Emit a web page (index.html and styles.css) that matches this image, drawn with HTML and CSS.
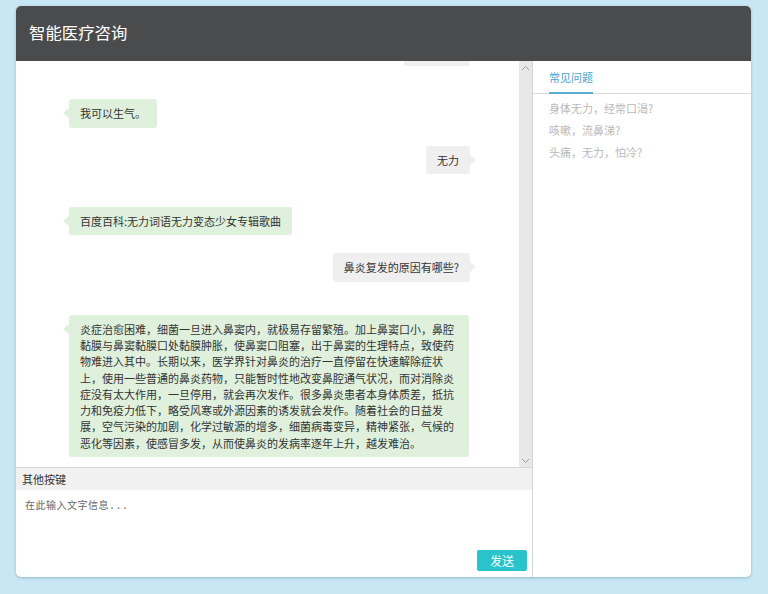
FILE: index.html
```html
<!DOCTYPE html>
<html lang="zh-CN">
<head>
<meta charset="utf-8">
<title>智能医疗咨询</title>
<link rel="stylesheet" href="styles.css">
</head>
<body>
<div class="app">
  <header class="header">智能医疗咨询</header>
  <div class="main">
    <section class="chat-col">
      <div class="chat-wrap">
        <div class="messages">
          <div class="row right"><div class="bubble me">我很生气</div></div>
          <div class="row left"><div class="bubble bot">我可以生气。</div></div>
          <div class="row right"><div class="bubble me">无力</div></div>
          <div class="row left"><div class="bubble bot">百度百科:无力词语无力变态少女专辑歌曲</div></div>
          <div class="row right"><div class="bubble me">鼻炎复发的原因有哪些?</div></div>
          <div class="row left"><div class="bubble bot">炎症治愈困难，细菌一旦进入鼻窦内，就极易存留繁殖。加上鼻窦口小，鼻腔黏膜与鼻窦黏膜口处黏膜肿胀，使鼻窦口阻塞，出于鼻窦的生理特点，致使药物难进入其中。长期以来，医学界针对鼻炎的治疗一直停留在快速解除症状上，使用一些普通的鼻炎药物，只能暂时性地改变鼻腔通气状况，而对消除炎症没有太大作用，一旦停用，就会再次发作。很多鼻炎患者本身体质差，抵抗力和免疫力低下，略受风寒或外源因素的诱发就会发作。随着社会的日益发展，空气污染的加剧，化学过敏源的增多，细菌病毒变异，精神紧张，气候的恶化等因素，使感冒多发，从而使鼻炎的发病率逐年上升，越发难治。</div></div>
        </div>
        <div class="scrollbar">
          <svg class="chev" width="9" height="6" viewBox="0 0 9 6"><polyline points="1,5 4.5,1.5 8,5" fill="none" stroke="#9a9a9a" stroke-width="1"/></svg>
          <svg class="chev" width="9" height="6" viewBox="0 0 9 6"><polyline points="1,1 4.5,4.5 8,1" fill="none" stroke="#9a9a9a" stroke-width="1"/></svg>
        </div>
      </div>
      <div class="toolbar">其他按键</div>
      <div class="input-area">
        <textarea class="input" placeholder="在此输入文字信息..."></textarea>
        <button class="send" type="button">发送</button>
      </div>
    </section>
    <aside class="side">
      <div class="tabs"><span class="tab">常见问题</span></div>
      <ul class="faq">
        <li>身体无力，经常口渴?</li>
        <li>咳嗽，流鼻涕?</li>
        <li>头痛，无力，怕冷?</li>
      </ul>
    </aside>
  </div>
</div>
</body>
</html>
```
FILE: styles.css
```css
* { box-sizing: border-box; }
html, body { height: 100%; }
body {
  margin: 0;
  background: #c8e7f5;
  padding: 6px 17px 0 16px;
  font-family: "Noto Sans CJK SC", "Noto Sans", sans-serif;
  color: #333;
}
.app {
  width: 735px;
  height: 571px;
  background: #fff;
  border-radius: 5px;
  box-shadow: 0 1px 3px rgba(40, 80, 110, 0.3);
  display: flex;
  flex-direction: column;
  overflow: hidden;
}
.header {
  height: 55px;
  flex: none;
  background: #4a4b4c;
  color: #fff;
  font-size: 16.4px;
  padding: 0 0 3px 13px;
  display: flex;
  align-items: center;
}
.main {
  flex: 1;
  display: flex;
  min-height: 0;
}
.chat-col {
  width: 516px;
  flex: none;
  display: flex;
  flex-direction: column;
}
.chat-wrap {
  height: 407px;
  flex: none;
  display: flex;
  border-bottom: 1px solid #d6d6d6;
}
.messages {
  flex: 1;
  overflow: hidden;
  display: flex;
  flex-direction: column;
  justify-content: flex-end;
  padding: 0 49px 10px 53px;
}
.row { display: flex; flex: none; }
.row.left { justify-content: flex-start; margin-top: 33px; }
.row.right { justify-content: flex-end; margin-top: 18px; }
.bubble {
  position: relative;
  max-width: 400px;
  padding: 6px 11px;
  font-size: 11px;
  line-height: 16.3px;
  border-radius: 3px;
  color: #333;
}
.bubble.bot { background: #dff0dc; }
.bubble.me { background: #efefef; }
.bubble::before {
  content: "";
  position: absolute;
  top: 9px;
  border-top: 5px solid transparent;
  border-bottom: 5px solid transparent;
}
.bubble.bot::before { left: -6px; border-right: 6px solid #dff0dc; }
.bubble.me::before { right: -6px; border-left: 6px solid #efefef; }
.scrollbar {
  width: 13px;
  flex: none;
  background: #e8e8e8;
  display: flex;
  flex-direction: column;
  justify-content: space-between;
  align-items: center;
  padding: 4px 0 3px;
}
.chev { display: block; }
.toolbar {
  height: 22px;
  flex: none;
  background: #f1f1f1;
  font-size: 11px;
  line-height: 22px;
  padding-left: 6px;
  color: #333;
}
.input-area {
  flex: 1;
  display: flex;
  flex-direction: column;
}
.input {
  flex: 1;
  border: none;
  outline: none;
  resize: none;
  padding: 7px 9px;
  font-family: "Liberation Mono", "Noto Sans CJK SC", monospace;
  font-size: 10px;
  letter-spacing: 0.5px;
  color: #666;
}
.input::placeholder { color: #666; }
.send {
  align-self: flex-end;
  width: 50px;
  height: 21px;
  margin: 0 5px 6px 0;
  border: none;
  border-radius: 2px;
  background: #29c3cc;
  color: #fff;
  font-family: "Noto Sans CJK SC", sans-serif;
  font-size: 12px;
  padding: 0;
}
.side {
  flex: 1;
  border-left: 1px solid #d4d4d4;
}
.tabs {
  height: 33px;
  border-bottom: 1px solid #dadada;
  padding-left: 16px;
  display: flex;
  align-items: flex-end;
}
.tab {
  font-size: 11px;
  line-height: 30px;
  color: #4aa3cd;
  border-bottom: 2px solid #5aaed5;
  margin-bottom: -1px;
}
.faq {
  list-style: none;
  margin: 0;
  padding: 3px 0 0 16px;
}
.faq li {
  font-size: 11px;
  line-height: 22px;
  color: #b8b8b8;
}
```
